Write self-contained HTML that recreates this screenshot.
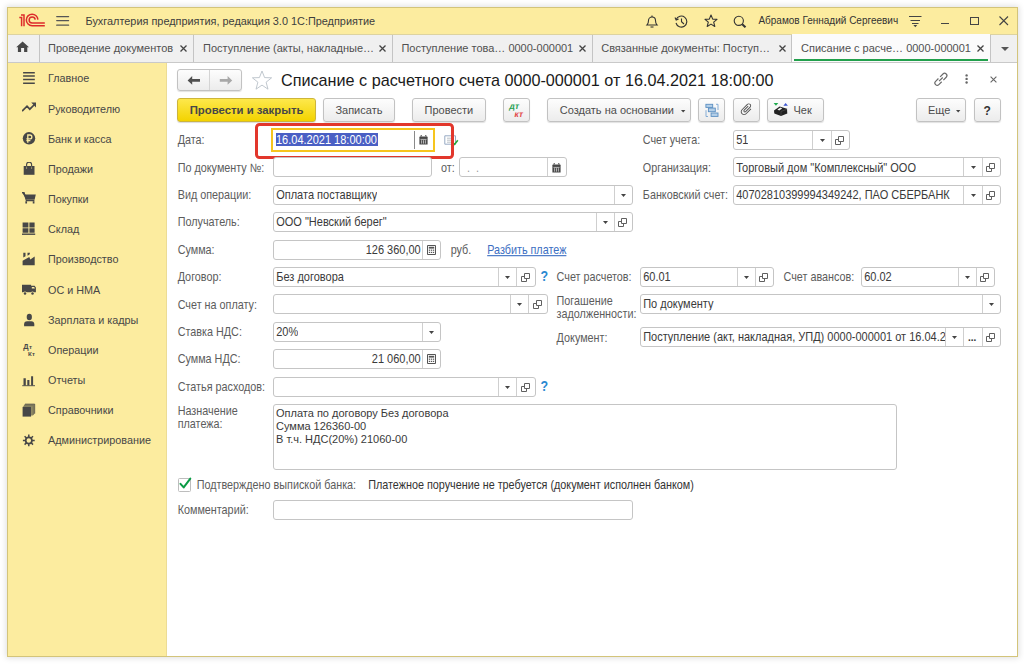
<!DOCTYPE html>
<html><head><meta charset="utf-8">
<style>
*{box-sizing:border-box}
html,body{margin:0;padding:0}
body{width:1024px;height:664px;background:#fff;position:relative;overflow:hidden;font-family:"Liberation Sans",sans-serif;font-size:10.8px;color:#333}
.a{position:absolute}
.tx{position:absolute;white-space:nowrap;line-height:12px}
.tf{transform:scaleY(1.1);transform-origin:0 9.8px}
#win{left:7px;top:7px;width:1011px;height:650px;border:1px solid #d3c47a;box-shadow:0 0 6px 1px rgba(0,0,0,.13)}
#title{left:8px;top:8px;width:1009px;height:27px;background:#fcec9f;border-bottom:1px solid #ddd3a0}
#tabs{left:8px;top:35px;width:1009px;height:28px;background:#f0f0f0;border-bottom:1px solid #c9c9c9}
#side{left:8px;top:63px;width:159px;height:593px;background:#fcec9f;border-right:1px solid #ecdc95}
.sep{position:absolute;top:35px;width:1px;height:27px;background:#c4c4c4}
.lbl{color:#4d4d4d}
.f{position:absolute;border:1px solid #c5c5c5;border-radius:3px;background:#fff;height:20px}
.f .v{position:absolute;left:3px;top:3px;white-space:nowrap;line-height:12px;color:#333}
.dd{position:absolute;top:0;width:18px;height:18px;border-left:1px solid #c5c5c5}
.dd:after{content:"";position:absolute;left:6px;top:7px;border-left:3.5px solid transparent;border-right:3.5px solid transparent;border-top:4px solid #444}
.op{position:absolute;top:0;width:18px;height:18px;border-left:1px solid #c5c5c5}
.op svg{position:absolute;left:4px;top:4px}
.btn{position:absolute;height:23px;border:1px solid #c2c2c2;border-radius:3px;background:linear-gradient(#fdfdfd,#ececec);box-shadow:0 1px 1px rgba(0,0,0,.12)}
.btn .bt{position:absolute;top:5px;white-space:nowrap;line-height:12px;color:#444}
.q{position:absolute;color:#2a8bd0;font-weight:bold;font-size:12px;line-height:12px}
</style></head>
<body>
<div id="win" class="a"></div>
<div id="title" class="a"></div>
<div id="tabs" class="a"></div>
<div id="side" class="a"></div>

<!-- title bar -->
<svg class="a" style="left:0;top:0" width="50" height="32" viewBox="0 0 50 32"><g fill="none" stroke="#dd2b2b" stroke-width="1.5"><path d="M19.3 17.6 H21.6 V26.3"/><path d="M21 14.9 H24 V26.3"/><path d="M44.8 25.7 H32.1 A5.75 5.75 0 0 1 32.1 14.2 A5.75 5.75 0 0 1 37.9 19.6"/><path d="M44.8 23.1 H32.2 A3.05 3.05 0 0 1 32.2 17 A3.05 3.05 0 0 1 35.2 19.6"/></g></svg>
<svg class="a" style="left:56px;top:14px" width="14" height="14" viewBox="0 0 14 14"><g stroke="#555" stroke-width="1.25" stroke-linecap="round"><path d="M0.7 2.5H12.6M0.7 6.6H12.6M0.7 11.2H12.6"/></g></svg>
<div class="tx" style="left:85.5px;top:15px;font-size:10.9px;color:#3d3d3d">Бухгалтерия предприятия, редакция 3.0 1С:Предприятие</div>

<svg class="a" style="left:645px;top:14px" width="14" height="14" viewBox="0 0 14 14"><g fill="none" stroke="#333" stroke-width="1.1"><path d="M2 11 Q3.5 9.5 3.5 6.5 A3.5 3.5 0 0 1 10.5 6.5 Q10.5 9.5 12 11 Z"/><path d="M5.5 13 H8.5"/><path d="M7 1.5 V3"/></g></svg>
<svg class="a" style="left:674px;top:15px" width="14" height="13" viewBox="0 0 14 13"><g fill="none" stroke="#333" stroke-width="1.1"><path d="M2.2 4.5 A5.5 5.5 0 1 1 2 8"/><path d="M1 2.5 L2.2 5 L4.6 4"/><path d="M7.5 3.5 V6.7 L10 9"/></g></svg>
<svg class="a" style="left:704px;top:14px" width="14" height="14" viewBox="0 0 14 14"><path d="M7 1 L8.7 5.1 L13 5.3 L9.7 8.1 L10.8 12.5 L7 10.1 L3.2 12.5 L4.3 8.1 L1 5.3 L5.3 5.1 Z" fill="none" stroke="#333" stroke-width="1.1" stroke-linejoin="round"/></svg>
<svg class="a" style="left:733px;top:15px" width="14" height="13" viewBox="0 0 14 13"><g fill="none" stroke="#333"><circle cx="5.8" cy="5.8" r="4.6" stroke-width="1.1"/><path d="M9.2 9.2 L12.5 12.3" stroke-width="2"/></g></svg>
<div class="tx" style="left:758.4px;top:15px;font-size:10px;color:#333">Абрамов Геннадий Сергеевич</div>
<svg class="a" style="left:909px;top:15px" width="13" height="13" viewBox="0 0 13 13"><g stroke="#444" stroke-width="1"><path d="M0 1.5H12.5M1.5 5.5H11M3 8.5H9.5"/></g><path d="M4.4 10 H8.2 L6.3 12.2 Z" fill="#444"/></svg>
<div class="a" style="left:941px;top:23px;width:8px;height:1.2px;background:#444"></div>
<div class="a" style="left:970px;top:17px;width:9px;height:8px;border:1.1px solid #444"></div>
<svg class="a" style="left:999px;top:16px" width="10" height="10" viewBox="0 0 10 10"><path d="M0.5 0.5L9 9M9 0.5L0.5 9" stroke="#444" stroke-width="1.1"/></svg>

<!-- tabs -->
<div class="sep" style="left:39px"></div>
<div class="sep" style="left:193px"></div>
<div class="sep" style="left:392px"></div>
<div class="sep" style="left:592px"></div>
<div class="sep" style="left:791px"></div>
<div class="sep" style="left:990px"></div>
<div class="a" style="left:792px;top:34px;width:198px;height:28px;background:#fbfbfb"></div>
<div class="a" style="left:794px;top:59px;width:194px;height:2px;background:#22a04c"></div>
<svg class="a" style="left:16px;top:41px" width="14" height="12" viewBox="0 0 14 12"><path d="M6.6 0.6 L13 6.2 H11.3 V10.9 H8.1 V7 H5.1 V10.9 H1.9 V6.2 H0.2 Z" fill="#474747"/></svg>
<div class="tx" style="left:48px;top:42px;color:#505050;font-size:11px">Проведение документов</div>
<div class="tx" style="left:203px;top:42px;color:#505050;font-size:11px">Поступление (акты, накладные…</div>
<div class="tx" style="left:401.4px;top:42px;color:#505050;font-size:11px">Поступление това… 0000-000001</div>
<div class="tx" style="left:601.2px;top:42px;color:#505050;font-size:11px">Связанные документы: Поступ…</div>
<div class="tx" style="left:801px;top:42px;color:#505050;font-size:11px">Списание с расче… 0000-000001</div>
<svg class="a" style="left:180px;top:45px" width="7" height="7" viewBox="0 0 7 7"><path d="M0.5 0.5L6.5 6.5M6.5 0.5L0.5 6.5" stroke="#444" stroke-width="1.3"/></svg>
<svg class="a" style="left:379px;top:45px" width="7" height="7" viewBox="0 0 7 7"><path d="M0.5 0.5L6.5 6.5M6.5 0.5L0.5 6.5" stroke="#444" stroke-width="1.3"/></svg>
<svg class="a" style="left:579px;top:45px" width="7" height="7" viewBox="0 0 7 7"><path d="M0.5 0.5L6.5 6.5M6.5 0.5L0.5 6.5" stroke="#444" stroke-width="1.3"/></svg>
<svg class="a" style="left:778.5px;top:45px" width="7" height="7" viewBox="0 0 7 7"><path d="M0.5 0.5L6.5 6.5M6.5 0.5L0.5 6.5" stroke="#444" stroke-width="1.3"/></svg>
<svg class="a" style="left:977px;top:45px" width="7" height="7" viewBox="0 0 7 7"><path d="M0.5 0.5L6.5 6.5M6.5 0.5L0.5 6.5" stroke="#444" stroke-width="1.3"/></svg>
<div class="a" style="left:1000.5px;top:46.5px;border-left:4px solid transparent;border-right:4px solid transparent;border-top:4px solid #555"></div>

<!-- SIDEBAR -->
<!--SIDEBAR-->
<div class="tx" style="left:48px;top:72.4px;color:#474747">Главное</div>
<svg class="a" style="left:22px;top:71.2px" width="14" height="14" viewBox="0 0 14 14"><g stroke="#474747" stroke-width="1.5"><path d="M1.1 1.7H12.8M1.1 5.1H12.8M1.1 8.6H12.8M1.1 12.2H12.8"/></g></svg>
<div class="tx" style="left:48px;top:102.6px;color:#474747">Руководителю</div>
<svg class="a" style="left:22px;top:101.4px" width="14" height="14" viewBox="0 0 14 14"><path d="M0.6 9.6 L5 5.2 L7.8 8.2 L12 4" fill="none" stroke="#474747" stroke-width="1.7" stroke-linecap="round"/><path d="M9.2 1.6 L14 1.6 L14 6.4 Z" fill="#474747"/></svg>
<div class="tx" style="left:48px;top:132.7px;color:#474747">Банк и касса</div>
<svg class="a" style="left:22px;top:131.5px" width="14" height="14" viewBox="0 0 14 14"><circle cx="7" cy="6.3" r="6.2" fill="#474747"/><path d="M5.8 10.8 V3 H7.9 A1.95 1.95 0 0 1 7.9 6.9 H4.4 M4.4 8.7 H8.4" fill="none" stroke="#fcec9f" stroke-width="1.3"/></svg>
<div class="tx" style="left:48px;top:162.9px;color:#474747">Продажи</div>
<svg class="a" style="left:22px;top:161.7px" width="14" height="14" viewBox="0 0 14 14"><path d="M1.7 4 H12.5 V12.8 H1.7 Z" fill="#474747"/><path d="M4.6 7.4 V2.6 A2.5 2.5 0 0 1 9.6 2.6 V7.4" fill="none" stroke="#474747" stroke-width="1.1"/><path d="M4.6 4.6 V7 M9.6 4.6 V7" stroke="#a09a70" stroke-width="0.9"/></svg>
<div class="tx" style="left:48px;top:193.1px;color:#474747">Покупки</div>
<svg class="a" style="left:22px;top:191.9px" width="14" height="14" viewBox="0 0 14 14"><path d="M0 0.6 H2.2 L3.4 2.6 H13.8 L12.6 7.8 H4.6 Z" fill="#474747"/><path d="M0 0.7 H2 L4.4 8.6 H12.4" fill="none" stroke="#474747" stroke-width="1.2"/><path d="M4.2 9.2 V11.4 M11.6 9.2 V11.4" stroke="#474747" stroke-width="1.7"/></svg>
<div class="tx" style="left:48px;top:223.2px;color:#474747">Склад</div>
<svg class="a" style="left:22px;top:222.1px" width="14" height="14" viewBox="0 0 14 14"><path d="M0.6 0.4 H6.4 V5.4 H0.6Z M7.4 0.4 H12.6 V5.4 H7.4Z M0.6 6.2 H6.4 V10.8 H0.6Z M7.4 6.2 H12.6 V10.8 H7.4Z" fill="#474747"/><path d="M0 12.2 H13.2" stroke="#474747" stroke-width="1.4"/></svg>
<div class="tx" style="left:48px;top:253.4px;color:#474747">Производство</div>
<svg class="a" style="left:22px;top:252.2px" width="14" height="14" viewBox="0 0 14 14"><path d="M0.6 13.2 V8.7 L7.3 4.9 L8.3 7.6 L12.7 4.6 V13.2 Z" fill="#474747"/><path d="M1.3 0.8 H3.5 V4.3 L1.3 5.6Z M5.5 0.8 H8 L7.6 2.6 L5.5 3.8Z" fill="#474747"/></svg>
<div class="tx" style="left:48px;top:283.6px;color:#474747">ОС и НМА</div>
<svg class="a" style="left:22px;top:282.4px" width="14" height="14" viewBox="0 0 14 14"><path d="M0 2.7 H9.1 V10.3 H0Z M9.1 3.7 H12.6 L13.9 5.6 V10.3 H9.1Z" fill="#474747"/><path d="M9.8 5 H12.2 L12.9 6.6 H9.8Z" fill="#fcec9f"/><circle cx="3" cy="11.4" r="1.9" fill="#fcec9f"/><circle cx="10.5" cy="11.4" r="1.9" fill="#fcec9f"/><circle cx="3" cy="11.6" r="1.25" fill="#474747"/><circle cx="10.5" cy="11.6" r="1.25" fill="#474747"/></svg>
<div class="tx" style="left:48px;top:313.8px;color:#474747">Зарплата и кадры</div>
<svg class="a" style="left:22px;top:312.6px" width="14" height="14" viewBox="0 0 14 14"><ellipse cx="7.3" cy="4" rx="2.6" ry="3.3" fill="#474747"/><path d="M2.1 13.2 V11.2 Q2.1 8.2 5.2 8.2 H9.2 Q12.3 8.2 12.3 11.2 V13.2Z" fill="#474747"/></svg>
<div class="tx" style="left:48px;top:343.9px;color:#474747">Операции</div>
<svg class="a" style="left:22px;top:342.7px" width="14" height="14" viewBox="0 0 14 14"><text x="1.2" y="5.9" font-family="Liberation Sans" font-size="7.4" font-weight="bold" fill="#474747">Д</text><text x="7" y="5.9" font-family="Liberation Sans" font-size="6.2" font-weight="bold" fill="#474747">т</text><text x="6" y="13" font-family="Liberation Sans" font-size="6.2" font-weight="bold" fill="#474747">К</text><text x="10.1" y="13" font-family="Liberation Sans" font-size="6" font-weight="bold" fill="#474747">т</text></svg>
<div class="tx" style="left:48px;top:374.1px;color:#474747">Отчеты</div>
<svg class="a" style="left:22px;top:372.9px" width="14" height="14" viewBox="0 0 14 14"><path d="M1.5 5.2 H3.8 V12.5 H1.5Z M5.3 6.9 H7.4 V12.5 H5.3Z M9.1 3.2 H11.1 V12.5 H9.1Z" fill="#474747"/><path d="M0.2 12.7 H13" stroke="#474747" stroke-width="0.9"/></svg>
<div class="tx" style="left:48px;top:404.3px;color:#474747">Справочники</div>
<svg class="a" style="left:22px;top:403.1px" width="14" height="14" viewBox="0 0 14 14"><path d="M1.3 3.2 L3 1.1 H12.7 V10.6 L11 12.6 H9.1 V3.9 H1.3Z" fill="#8c8763"/><path d="M3 1.1 H12.7 V10.6" fill="none" stroke="#55534a" stroke-width="0.8"/><path d="M2.2 2.2 H11.3 V11.6" fill="none" stroke="#6b6852" stroke-width="0.6"/><path d="M0.6 3.9 H9.1 V13.6 H0.6Z" fill="#474747"/></svg>
<div class="tx" style="left:48px;top:434.4px;color:#474747">Администрирование</div>
<svg class="a" style="left:22px;top:433.2px" width="14" height="14" viewBox="0 0 14 14"><g transform="translate(6.8 7.4)"><circle r="3.1" fill="none" stroke="#474747" stroke-width="1.7"/><g stroke="#474747" stroke-width="1.5"><path d="M0 -5.9 V-3 M0 5.9 V3 M-5.9 0 H-3 M5.9 0 H3 M-4.2 -4.2 L-2.1 -2.1 M4.2 4.2 L2.1 2.1 M-4.2 4.2 L-2.1 2.1 M4.2 -4.2 L2.1 -2.1"/></g></g></svg>
<!-- FORM HEADER -->
<!--HEADER-->
<div class="btn" style="left:177px;top:69px;width:65px;height:22px"></div>
<div class="a" style="left:209px;top:70px;width:1px;height:20px;background:#d4d4d4"></div>
<svg class="a" style="left:187px;top:75px" width="14" height="11" viewBox="0 0 14 11"><path d="M0.6 5.4 L5.2 1 V4 H13 V6.8 H5.2 V9.8 Z" fill="#505050"/></svg>
<svg class="a" style="left:218.5px;top:75px" width="14" height="11" viewBox="0 0 14 11"><path d="M13.2 5.4 L8.6 1 V4 H0.8 V6.8 H8.6 V9.8 Z" fill="#a8a8a8"/></svg>
<svg class="a" style="left:251px;top:70px" width="22" height="21" viewBox="0 0 22 21"><path d="M11 1 L13.6 7.6 L20.6 7.8 L15.1 12.2 L17 19.2 L11 15.1 L5 19.2 L6.9 12.2 L1.4 7.8 L8.4 7.6 Z" fill="#fff" stroke="#b9c1c8" stroke-width="0.9" stroke-linejoin="miter"/></svg>
<div class="tx" style="left:281px;top:70.9px;font-size:16.2px;line-height:18px;color:#1a1a1a">Списание с расчетного счета 0000-000001 от 16.04.2021 18:00:00</div>
<svg class="a" style="left:933px;top:72px" width="16" height="15" viewBox="0 0 16 15"><g transform="translate(7.9 7.3) rotate(-45)" fill="none" stroke="#6a6a6a" stroke-width="1.2"><path d="M-1.2 -2.3 H-5.2 A2.3 2.3 0 0 0 -5.2 2.3 H-1.2"/><path d="M1.2 -2.3 H5.2 A2.3 2.3 0 0 1 5.2 2.3 H1.2"/><path d="M-2.6 0 H2.6"/></g></svg>
<svg class="a" style="left:964px;top:73px" width="5" height="13" viewBox="0 0 5 13"><g fill="#666"><circle cx="2.6" cy="2.4" r="1.2"/><circle cx="2.6" cy="5.9" r="1.2"/><circle cx="2.6" cy="9.5" r="1.2"/></g></svg>
<svg class="a" style="left:990px;top:76px" width="7" height="7" viewBox="0 0 7 7"><path d="M0.6 0.6L6.4 6.4M6.4 0.6L0.6 6.4" stroke="#666" stroke-width="1.1"/></svg>
<div class="a" style="left:177.3px;top:98px;width:138.7px;height:24px;border:1px solid #cdb53a;border-radius:3px;background:linear-gradient(#fde84c,#f3d300);box-shadow:0 1px 1px rgba(0,0,0,.15)"></div>
<div class="tx" style="left:189.7px;top:104.1px;font-size:11.35px;font-weight:bold;color:#474747">Провести и закрыть</div>
<div class="btn" style="left:323px;top:98px;width:72.0px;height:24px"></div>
<div class="tx" style="left:335.4px;top:104.2px;font-size:11px;color:#4d4d4d">Записать</div>
<div class="btn" style="left:412px;top:98px;width:74.0px;height:24px"></div>
<div class="tx" style="left:424.6px;top:104.2px;font-size:11px;color:#4d4d4d">Провести</div>
<div class="btn" style="left:503px;top:98px;width:27.0px;height:24px"></div>
<svg class="a" style="left:507px;top:101px" width="20" height="18" viewBox="0 0 20 18"><text x="3.4" y="8.3" font-family="Liberation Sans" font-size="8.6" font-weight="bold" fill="#27a155" transform="skewX(-10)">дт</text><text x="9.9" y="15.9" font-family="Liberation Sans" font-size="8.6" font-weight="bold" fill="#e2484a" transform="skewX(-10)">кт</text></svg>
<div class="btn" style="left:547px;top:98px;width:144.0px;height:24px"></div>
<div class="tx" style="left:559.8px;top:104.2px;font-size:11px;color:#4d4d4d">Создать на основании</div>
<svg class="a" style="left:680.5px;top:109.5px" width="5" height="3" viewBox="0 0 5 3"><path d="M0 0H4.4L2.2 2.4Z" fill="#444"/></svg>
<div class="btn" style="left:698px;top:98px;width:27.0px;height:24px"></div>
<svg class="a" style="left:704px;top:103px" width="16" height="15" viewBox="0 0 16 15"><g fill="#b4cfe8" stroke="#5b8fc2" stroke-width="0.9"><rect x="1.9" y="1.3" width="6.8" height="3.1"/><rect x="4.4" y="5.1" width="6.9" height="3.6"/><rect x="7.1" y="10" width="6.9" height="3.4"/></g><g fill="none" stroke="#7aa6d2" stroke-width="0.9"><path d="M2 7.2 V13.5 H4"/><path d="M12 1.3 H14 V7"/></g></svg>
<div class="btn" style="left:733px;top:98px;width:27.0px;height:24px"></div>
<svg class="a" style="left:740px;top:103px" width="13" height="13" viewBox="0 0 13 13"><path transform="translate(6.4 6.4) rotate(45) scale(0.6) translate(-12.5 -12)" d="M16.5 6v11.5c0 2.21-1.79 4-4 4s-4-1.79-4-4V5c0-1.38 1.12-2.5 2.5-2.5s2.5 1.12 2.5 2.5v10.5c0 .55-.45 1-1 1s-1-.45-1-1V6H10v9.5c0 1.38 1.12 2.5 2.5 2.5s2.5-1.120 2.5-2.5V5c0-2.21-1.79-4-4-4S7 2.79 7 5v12.5c0 3.04 2.46 5.5 5.5 5.5s5.5-2.46 5.5-5.5V6h-1.5z" fill="#505050"/></svg>
<div class="btn" style="left:767px;top:98px;width:57.0px;height:24px"></div>
<svg class="a" style="left:772px;top:101px" width="18" height="18" viewBox="0 0 18 18"><path d="M1.6 2.1 H6.3 L3.95 4.8Z" fill="#1fab4f"/><path d="M11.4 4.8 H15.9 L13.65 2.1Z" fill="#3b55d0"/><path d="M2 9.6 L7.6 5.4 L15 7.8 L15.3 12.6 L9 15.1 L2.3 12.6Z" fill="#222"/><path d="M9 10.4 L15.2 8.2 M9 10.4 V15" stroke="#555" stroke-width="0.6"/><path d="M5.4 8.6 L8.5 6.6 L10.2 7.5 L7.2 9.4Z" fill="#f4f4f4"/></svg>
<div class="tx" style="left:793.5px;top:104.2px;font-size:11px;color:#4d4d4d">Чек</div>
<div class="btn" style="left:916px;top:98px;width:50.0px;height:24px"></div>
<div class="tx" style="left:928px;top:104.2px;font-size:11px;color:#4d4d4d">Еще</div>
<svg class="a" style="left:955.5px;top:109.5px" width="5" height="3" viewBox="0 0 5 3"><path d="M0 0H4.4L2.2 2.4Z" fill="#444"/></svg>
<div class="btn" style="left:974px;top:98px;width:27.0px;height:24px"></div>
<div class="tx" style="left:983.5px;top:104.8px;font-size:12px;font-weight:bold;color:#333">?</div>
<!-- FORM FIELDS -->
<!--FIELDS-->
<div class="tx tf" style="left:177.7px;top:134.4px;color:#5c5c5c">Дата:</div>
<svg class="a" style="left:443.5px;top:134.5px" width="15" height="11" viewBox="0 0 15 11"><path d="M0.8 0.8 H11.5 V9.2 H0.8Z" fill="#fff" stroke="#98aac4" stroke-width="1"/><path d="M3 3.2 H9.5 M3 5.2 H9.5 M3 7.2 H9.5" stroke="#a8b0b8" stroke-width="0.8"/><path d="M9.6 8.4 L10.6 9.4 L13.8 5.2" fill="none" stroke="#25a83a" stroke-width="1.6"/></svg>
<div class="a" style="left:270.6px;top:127.8px;width:164.4px;height:24.2px;border:2px solid #f6c51e;background:#fff"></div>
<div class="a" style="left:275.6px;top:133.2px;width:102.2px;height:12.8px;background:#4a5fc4"></div>
<div class="tx tf" style="left:276px;top:134.2px;font-size:11px;color:#fff">16.04.2021 18:00:00</div>
<div class="a" style="left:414px;top:131px;width:1px;height:18px;background:#8a8a8a"></div>
<div class="a" style="left:419px;top:135.2px;width:9px;height:10px"><svg width="9" height="10" viewBox="0 0 9 10"><path d="M1 1.6 H8 Q8.6 1.6 8.6 2.2 V9.4 H0.4 V2.2 Q0.4 1.6 1 1.6Z" fill="#484848"/><path d="M2.3 0.3 V2.4 M6.7 0.3 V2.4" stroke="#484848" stroke-width="1.4"/><path d="M2.3 0.9 V1.9 M6.7 0.9 V1.9" stroke="#ddd" stroke-width="0.6"/><g stroke="#e8e8e8" stroke-width="0.7"><path d="M1.5 4.4 H7.5"/><path d="M2.6 5.2 V8.6 M4.5 5.2 V8.6 M6.4 5.2 V8.6"/></g></svg></div>
<div class="a" style="left:254.5px;top:122.5px;width:199.5px;height:36px;border:3.3px solid #e2372c;border-radius:4.5px"></div>
<div class="tx tf" style="left:177.7px;top:161.7px;color:#5c5c5c">По документу №:</div>
<div class="f" style="left:273px;top:157px;width:159.0px;height:20px"></div>
<div class="tx tf" style="left:441px;top:161.7px;color:#5c5c5c">от:</div>
<div class="f" style="left:459px;top:157px;width:108.0px;height:20px"></div>
<div class="a" style="left:547px;top:158px;width:1px;height:18px;background:#cfcfcf"></div>
<div class="a" style="left:552.0px;top:163.0px;width:9px;height:10px"><svg width="9" height="10" viewBox="0 0 9 10"><path d="M1 1.6 H8 Q8.6 1.6 8.6 2.2 V9.4 H0.4 V2.2 Q0.4 1.6 1 1.6Z" fill="#484848"/><path d="M2.3 0.3 V2.4 M6.7 0.3 V2.4" stroke="#484848" stroke-width="1.4"/><path d="M2.3 0.9 V1.9 M6.7 0.9 V1.9" stroke="#ddd" stroke-width="0.6"/><g stroke="#e8e8e8" stroke-width="0.7"><path d="M1.5 4.4 H7.5"/><path d="M2.6 5.2 V8.6 M4.5 5.2 V8.6 M6.4 5.2 V8.6"/></g></svg></div>
<div class="tx tf" style="left:467px;top:161.7px;color:#999">.&nbsp;&nbsp;.</div>
<div class="tx tf" style="left:177.7px;top:189.1px;color:#5c5c5c">Вид операции:</div>
<div class="f" style="left:273px;top:185px;width:360.0px;height:20px"></div>
<div class="tx tf" style="left:276.2px;top:189.0px;font-size:11px;color:#3a3a3a;max-width:337.8px;overflow:hidden">Оплата поставщику</div>
<div class="a" style="left:614px;top:186px;width:1px;height:18px;background:#cfcfcf"></div>
<svg class="a" style="left:621.0px;top:193.8px" width="5" height="3" viewBox="0 0 5 3"><path d="M0 0H5L2.5 3Z" fill="#444"/></svg>
<div class="tx tf" style="left:177.7px;top:216.4px;color:#5c5c5c">Получатель:</div>
<div class="f" style="left:273px;top:212px;width:360.0px;height:20px"></div>
<div class="tx tf" style="left:276.2px;top:216.3px;font-size:11px;color:#3a3a3a;max-width:319.8px;overflow:hidden">ООО "Невский берег"</div>
<div class="a" style="left:596px;top:213px;width:1px;height:18px;background:#cfcfcf"></div>
<svg class="a" style="left:603.0px;top:220.8px" width="5" height="3" viewBox="0 0 5 3"><path d="M0 0H5L2.5 3Z" fill="#444"/></svg>
<div class="a" style="left:614px;top:213px;width:1px;height:18px;background:#cfcfcf"></div>
<div class="a" style="left:618px;top:217px;width:10px;height:11px"><svg width="10" height="11" viewBox="0 0 10 11"><path d="M3.5 1.5 H8.5 V6.5 H3.5Z" fill="none" stroke="#606060" stroke-width="1"/><path d="M3.5 4.5 H0.5 V9.5 H5.5 V6.5" fill="none" stroke="#606060" stroke-width="1"/></svg></div>
<div class="tx tf" style="left:177.7px;top:243.8px;color:#5c5c5c">Сумма:</div>
<div class="f" style="left:273px;top:240px;width:168.0px;height:20px"></div>
<div class="tx tf" style="right:603.3px;top:243.7px;font-size:11px;color:#3a3a3a">126 360,00</div>
<div class="a" style="left:422px;top:241px;width:1px;height:18px;background:#cfcfcf"></div>
<div class="a" style="left:427.0px;top:245.0px;width:9px;height:10px"><svg width="9" height="10" viewBox="0 0 9 10"><path d="M0.5 0.5 H8.5 V9.5 H0.5Z" fill="none" stroke="#555" stroke-width="1"/><rect x="1.8" y="1.8" width="5.4" height="1.8" fill="#555"/><g fill="#555"><rect x="1.8" y="4.6" width="1.3" height="1.2"/><rect x="3.85" y="4.6" width="1.3" height="1.2"/><rect x="5.9" y="4.6" width="1.3" height="1.2"/><rect x="1.8" y="6.8" width="1.3" height="1.2"/><rect x="3.85" y="6.8" width="1.3" height="1.2"/><rect x="5.9" y="6.8" width="1.3" height="1.2"/></g></svg></div>
<div class="tx tf" style="left:450.7px;top:243.8px;color:#5c5c5c">руб.</div>
<div class="tx tf" style="left:487.2px;top:243.8px;color:#3b6ec2;text-decoration:underline">Разбить платеж</div>
<div class="tx tf" style="left:177.7px;top:271.1px;color:#5c5c5c">Договор:</div>
<div class="f" style="left:273px;top:267px;width:263.0px;height:20px"></div>
<div class="tx tf" style="left:276.2px;top:271.0px;font-size:11px;color:#3a3a3a;max-width:221.8px;overflow:hidden">Без договора</div>
<div class="a" style="left:498px;top:268px;width:1px;height:18px;background:#cfcfcf"></div>
<svg class="a" style="left:505.0px;top:275.8px" width="5" height="3" viewBox="0 0 5 3"><path d="M0 0H5L2.5 3Z" fill="#444"/></svg>
<div class="a" style="left:516px;top:268px;width:1px;height:18px;background:#cfcfcf"></div>
<div class="a" style="left:521px;top:272px;width:10px;height:11px"><svg width="10" height="11" viewBox="0 0 10 11"><path d="M3.5 1.5 H8.5 V6.5 H3.5Z" fill="none" stroke="#606060" stroke-width="1"/><path d="M3.5 4.5 H0.5 V9.5 H5.5 V6.5" fill="none" stroke="#606060" stroke-width="1"/></svg></div>
<div class="tx tf" style="left:540.5px;top:269.7px;font-size:12.5px;line-height:14px;font-weight:bold;color:#2d8ad2">?</div>
<div class="tx tf" style="left:177.7px;top:298.5px;color:#5c5c5c">Счет на оплату:</div>
<div class="f" style="left:273px;top:294px;width:275.0px;height:20px"></div>
<div class="a" style="left:510px;top:295px;width:1px;height:18px;background:#cfcfcf"></div>
<svg class="a" style="left:517.0px;top:302.8px" width="5" height="3" viewBox="0 0 5 3"><path d="M0 0H5L2.5 3Z" fill="#444"/></svg>
<div class="a" style="left:528px;top:295px;width:1px;height:18px;background:#cfcfcf"></div>
<div class="a" style="left:533px;top:299px;width:10px;height:11px"><svg width="10" height="11" viewBox="0 0 10 11"><path d="M3.5 1.5 H8.5 V6.5 H3.5Z" fill="none" stroke="#606060" stroke-width="1"/><path d="M3.5 4.5 H0.5 V9.5 H5.5 V6.5" fill="none" stroke="#606060" stroke-width="1"/></svg></div>
<div class="tx tf" style="left:177.7px;top:325.8px;color:#5c5c5c">Ставка НДС:</div>
<div class="f" style="left:273px;top:322px;width:168.0px;height:20px"></div>
<div class="tx tf" style="left:276.2px;top:325.7px;font-size:11px;color:#3a3a3a;max-width:145.8px;overflow:hidden">20%</div>
<div class="a" style="left:422px;top:323px;width:1px;height:18px;background:#cfcfcf"></div>
<svg class="a" style="left:429.0px;top:330.8px" width="5" height="3" viewBox="0 0 5 3"><path d="M0 0H5L2.5 3Z" fill="#444"/></svg>
<div class="tx tf" style="left:177.7px;top:353.2px;color:#5c5c5c">Сумма НДС:</div>
<div class="f" style="left:273px;top:349px;width:168.0px;height:20px"></div>
<div class="tx tf" style="right:603.3px;top:353.1px;font-size:11px;color:#3a3a3a">21 060,00</div>
<div class="a" style="left:422px;top:350px;width:1px;height:18px;background:#cfcfcf"></div>
<div class="a" style="left:427.0px;top:354.0px;width:9px;height:10px"><svg width="9" height="10" viewBox="0 0 9 10"><path d="M0.5 0.5 H8.5 V9.5 H0.5Z" fill="none" stroke="#555" stroke-width="1"/><rect x="1.8" y="1.8" width="5.4" height="1.8" fill="#555"/><g fill="#555"><rect x="1.8" y="4.6" width="1.3" height="1.2"/><rect x="3.85" y="4.6" width="1.3" height="1.2"/><rect x="5.9" y="4.6" width="1.3" height="1.2"/><rect x="1.8" y="6.8" width="1.3" height="1.2"/><rect x="3.85" y="6.8" width="1.3" height="1.2"/><rect x="5.9" y="6.8" width="1.3" height="1.2"/></g></svg></div>
<div class="tx tf" style="left:177.7px;top:380.5px;color:#5c5c5c">Статья расходов:</div>
<div class="f" style="left:273px;top:377px;width:263.0px;height:20px"></div>
<div class="a" style="left:498px;top:378px;width:1px;height:18px;background:#cfcfcf"></div>
<svg class="a" style="left:505.0px;top:385.8px" width="5" height="3" viewBox="0 0 5 3"><path d="M0 0H5L2.5 3Z" fill="#444"/></svg>
<div class="a" style="left:516px;top:378px;width:1px;height:18px;background:#cfcfcf"></div>
<div class="a" style="left:521px;top:382px;width:10px;height:11px"><svg width="10" height="11" viewBox="0 0 10 11"><path d="M3.5 1.5 H8.5 V6.5 H3.5Z" fill="none" stroke="#606060" stroke-width="1"/><path d="M3.5 4.5 H0.5 V9.5 H5.5 V6.5" fill="none" stroke="#606060" stroke-width="1"/></svg></div>
<div class="tx tf" style="left:540.5px;top:379.7px;font-size:12.5px;line-height:14px;font-weight:bold;color:#2d8ad2">?</div>
<div class="tx tf" style="left:177.7px;top:404.9px;color:#5c5c5c">Назначение</div>
<div class="tx tf" style="left:177.7px;top:417.6px;color:#5c5c5c">платежа:</div>
<div class="f" style="left:273px;top:404px;width:624px;height:66px"></div>
<div class="tx" style="left:276px;top:407.4px;font-size:11px;color:#3a3a3a">Оплата по договору Без договора</div>
<div class="tx" style="left:276px;top:420.0px;font-size:11px;color:#3a3a3a">Сумма 126360-00</div>
<div class="tx" style="left:276px;top:432.6px;font-size:11px;color:#3a3a3a">В т.ч. НДС(20%) 21060-00</div>
<div class="a" style="left:178px;top:478px;width:13px;height:14px;border:1px solid #bdbdbd;border-radius:1.5px;background:#fff"></div>
<svg class="a" style="left:178px;top:474px" width="16" height="16" viewBox="0 0 16 16"><path d="M2.5 9.8 L5.7 13.4 L12.3 4.6" fill="none" stroke="#0b9b45" stroke-width="2" stroke-linecap="round" stroke-linejoin="round"/></svg>
<div class="tx tf" style="left:196.7px;top:479.1px;color:#5c5c5c">Подтверждено выпиской банка:</div>
<div class="tx tf" style="left:368.2px;top:479.1px;color:#333">Платежное поручение не требуется (документ исполнен банком)</div>
<div class="tx tf" style="left:177.7px;top:504.3px;color:#5c5c5c">Комментарий:</div>
<div class="f" style="left:273px;top:500px;width:360.0px;height:20px"></div>
<div class="tx tf" style="left:642.8px;top:134.4px;color:#5c5c5c">Счет учета:</div>
<div class="f" style="left:733px;top:130px;width:117.0px;height:20px"></div>
<div class="tx tf" style="left:736.2px;top:134.3px;font-size:11px;color:#3a3a3a;max-width:75.8px;overflow:hidden">51</div>
<div class="a" style="left:812px;top:131px;width:1px;height:18px;background:#cfcfcf"></div>
<svg class="a" style="left:819.5px;top:138.8px" width="5" height="3" viewBox="0 0 5 3"><path d="M0 0H5L2.5 3Z" fill="#444"/></svg>
<div class="a" style="left:831px;top:131px;width:1px;height:18px;background:#cfcfcf"></div>
<div class="a" style="left:835px;top:135px;width:10px;height:11px"><svg width="10" height="11" viewBox="0 0 10 11"><path d="M3.5 1.5 H8.5 V6.5 H3.5Z" fill="none" stroke="#606060" stroke-width="1"/><path d="M3.5 4.5 H0.5 V9.5 H5.5 V6.5" fill="none" stroke="#606060" stroke-width="1"/></svg></div>
<div class="tx tf" style="left:642.8px;top:161.7px;color:#5c5c5c">Организация:</div>
<div class="f" style="left:733px;top:157px;width:268.0px;height:20px"></div>
<div class="tx tf" style="left:736.2px;top:161.6px;font-size:11px;color:#3a3a3a;max-width:226.8px;overflow:hidden">Торговый дом "Комплексный" ООО</div>
<div class="a" style="left:963px;top:158px;width:1px;height:18px;background:#cfcfcf"></div>
<svg class="a" style="left:970.5px;top:165.8px" width="5" height="3" viewBox="0 0 5 3"><path d="M0 0H5L2.5 3Z" fill="#444"/></svg>
<div class="a" style="left:982px;top:158px;width:1px;height:18px;background:#cfcfcf"></div>
<div class="a" style="left:986px;top:162px;width:10px;height:11px"><svg width="10" height="11" viewBox="0 0 10 11"><path d="M3.5 1.5 H8.5 V6.5 H3.5Z" fill="none" stroke="#606060" stroke-width="1"/><path d="M3.5 4.5 H0.5 V9.5 H5.5 V6.5" fill="none" stroke="#606060" stroke-width="1"/></svg></div>
<div class="tx tf" style="left:642.8px;top:189.1px;color:#5c5c5c">Банковский счет:</div>
<div class="f" style="left:733px;top:185px;width:268.0px;height:20px"></div>
<div class="tx tf" style="left:736.2px;top:189.0px;font-size:11px;color:#3a3a3a;max-width:226.8px;overflow:hidden">40702810399994349242, ПАО СБЕРБАНК</div>
<div class="a" style="left:963px;top:186px;width:1px;height:18px;background:#cfcfcf"></div>
<svg class="a" style="left:970.5px;top:193.8px" width="5" height="3" viewBox="0 0 5 3"><path d="M0 0H5L2.5 3Z" fill="#444"/></svg>
<div class="a" style="left:982px;top:186px;width:1px;height:18px;background:#cfcfcf"></div>
<div class="a" style="left:986px;top:190px;width:10px;height:11px"><svg width="10" height="11" viewBox="0 0 10 11"><path d="M3.5 1.5 H8.5 V6.5 H3.5Z" fill="none" stroke="#606060" stroke-width="1"/><path d="M3.5 4.5 H0.5 V9.5 H5.5 V6.5" fill="none" stroke="#606060" stroke-width="1"/></svg></div>
<div class="tx tf" style="left:556.6px;top:271.1px;color:#5c5c5c">Счет расчетов:</div>
<div class="f" style="left:640px;top:267px;width:134.0px;height:20px"></div>
<div class="tx tf" style="left:643.2px;top:271.0px;font-size:11px;color:#3a3a3a;max-width:93.8px;overflow:hidden">60.01</div>
<div class="a" style="left:737px;top:268px;width:1px;height:18px;background:#cfcfcf"></div>
<svg class="a" style="left:744.0px;top:275.8px" width="5" height="3" viewBox="0 0 5 3"><path d="M0 0H5L2.5 3Z" fill="#444"/></svg>
<div class="a" style="left:755px;top:268px;width:1px;height:18px;background:#cfcfcf"></div>
<div class="a" style="left:759px;top:272px;width:10px;height:11px"><svg width="10" height="11" viewBox="0 0 10 11"><path d="M3.5 1.5 H8.5 V6.5 H3.5Z" fill="none" stroke="#606060" stroke-width="1"/><path d="M3.5 4.5 H0.5 V9.5 H5.5 V6.5" fill="none" stroke="#606060" stroke-width="1"/></svg></div>
<div class="tx tf" style="left:783.5px;top:271.1px;color:#5c5c5c">Счет авансов:</div>
<div class="f" style="left:861px;top:267px;width:134.0px;height:20px"></div>
<div class="tx tf" style="left:864.2px;top:271.0px;font-size:11px;color:#3a3a3a;max-width:93.8px;overflow:hidden">60.02</div>
<div class="a" style="left:958px;top:268px;width:1px;height:18px;background:#cfcfcf"></div>
<svg class="a" style="left:965.0px;top:275.8px" width="5" height="3" viewBox="0 0 5 3"><path d="M0 0H5L2.5 3Z" fill="#444"/></svg>
<div class="a" style="left:976px;top:268px;width:1px;height:18px;background:#cfcfcf"></div>
<div class="a" style="left:980px;top:272px;width:10px;height:11px"><svg width="10" height="11" viewBox="0 0 10 11"><path d="M3.5 1.5 H8.5 V6.5 H3.5Z" fill="none" stroke="#606060" stroke-width="1"/><path d="M3.5 4.5 H0.5 V9.5 H5.5 V6.5" fill="none" stroke="#606060" stroke-width="1"/></svg></div>
<div class="tx tf" style="left:556.6px;top:295.3px;color:#5c5c5c">Погашение</div>
<div class="tx tf" style="left:556.6px;top:307.7px;color:#5c5c5c">задолженности:</div>
<div class="f" style="left:640px;top:294px;width:361.0px;height:20px"></div>
<div class="tx tf" style="left:643.2px;top:298.4px;font-size:11px;color:#3a3a3a;max-width:338.8px;overflow:hidden">По документу</div>
<div class="a" style="left:982px;top:295px;width:1px;height:18px;background:#cfcfcf"></div>
<svg class="a" style="left:989.0px;top:302.8px" width="5" height="3" viewBox="0 0 5 3"><path d="M0 0H5L2.5 3Z" fill="#444"/></svg>
<div class="tx tf" style="left:556.6px;top:331.9px;color:#5c5c5c">Документ:</div>
<div class="f" style="left:640px;top:327px;width:361.0px;height:20px"></div>
<div class="tx tf" style="left:643.2px;top:330.6px;font-size:11px;color:#3a3a3a;max-width:301.8px;overflow:hidden">Поступление (акт, накладная, УПД) 0000-000001 от 16.04.2021 18:00:00</div>
<div class="a" style="left:945px;top:328px;width:1px;height:18px;background:#cfcfcf"></div>
<svg class="a" style="left:952.0px;top:335.8px" width="5" height="3" viewBox="0 0 5 3"><path d="M0 0H5L2.5 3Z" fill="#444"/></svg>
<div class="a" style="left:963px;top:328px;width:1px;height:18px;background:#cfcfcf"></div>
<div class="tx tf" style="left:968.0px;top:332.0px;color:#333;font-weight:bold;font-size:10px">...</div>
<div class="a" style="left:982px;top:328px;width:1px;height:18px;background:#cfcfcf"></div>
<div class="a" style="left:986px;top:332px;width:10px;height:11px"><svg width="10" height="11" viewBox="0 0 10 11"><path d="M3.5 1.5 H8.5 V6.5 H3.5Z" fill="none" stroke="#606060" stroke-width="1"/><path d="M3.5 4.5 H0.5 V9.5 H5.5 V6.5" fill="none" stroke="#606060" stroke-width="1"/></svg></div>
</body></html>
